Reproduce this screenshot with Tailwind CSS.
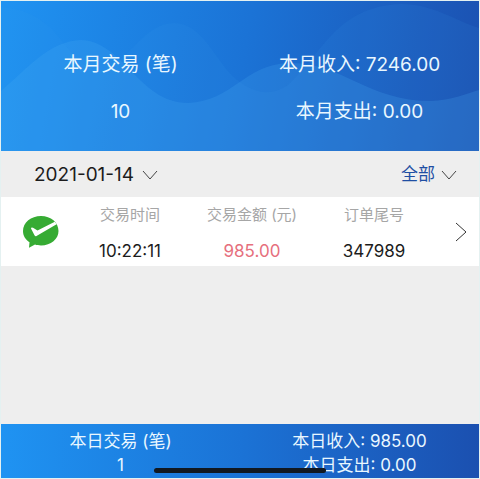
<!DOCTYPE html>
<html lang="zh-CN">

<head>
    <meta charset="UTF-8" />
    <meta name="viewport" content="width=device-width, initial-scale=1.0">
    <title>交易记录</title>
    <script src="https://cdn.jsdelivr.net/npm/@tailwindcss/browser@4"></script>
</head>

<body class="bg-[#eeeeee] min-h-screen flex flex-col border border-[#e4f1f1] font-['Inter','Noto_Sans_CJK_SC',sans-serif] text-[#1c1c1c]">

    <!-- Monthly summary -->
    <header class="relative h-[150px] bg-linear-100 from-[#1f93f2] via-[#1b73d6] to-[#1b50b0] text-[#e9f7ff] text-[19px] leading-7">
        <svg class="absolute inset-0 w-full h-full" viewBox="0 0 478 150" preserveAspectRatio="none" aria-hidden="true">
            <path fill="#3c9fe8" fill-opacity="0.1" d="M0 6C28 8 45 20 60 39C78 62 92 74 108 68C132 52 145 23 173 22C204 22 215 65 240 82C258 94 272 94 287 84C320 55 335 5 400 3C432 3 455 20 478 27V150H0Z" />
            <path fill="#4bb0f4" fill-opacity="0.2" d="M0 90C26 68 48 40 80 39C122 40 138 102 187 102C232 100 243 64 287 62C340 60 365 100 430 100C450 99 465 93 478 89V150H0Z" />
        </svg>
        <div class="relative grid grid-cols-2 gap-y-[19px] pt-[50px] text-center">
            <p>本月交易 (笔)</p>
            <p>本月收入: 7246.00</p>
            <p>10</p>
            <p>本月支出: 0.00</p>
        </div>
    </header>

    <main class="flex-1">
        <!-- Filters -->
        <div class="flex justify-between items-center h-[46px] pt-0.5 pl-[33px] pr-[22px]">
            <button class="flex items-center gap-2 text-[19px]">
                2021-01-14
                <svg class="w-4 h-4" viewBox="0 0 16 16" fill="none" stroke="#444444" aria-hidden="true">
                    <path d="M1 4L8 12L15 4" />
                </svg>
            </button>
            <button class="flex items-center gap-1.5 text-[17px] text-[#1f4ea3]">
                全部
                <svg class="w-4 h-4" viewBox="0 0 16 16" fill="none" stroke="#444444" aria-hidden="true">
                    <path d="M1 4L8 12L15 4" />
                </svg>
            </button>
        </div>

        <!-- Transaction -->
        <a href="#" class="flex items-center h-[69px] bg-white pl-[22px] pr-3">
            <svg class="w-9 h-8 shrink-0" viewBox="0 0 36 32" role="img" aria-label="微信支付">
                <path fill="#36ab33" d="M18 0C8 0 0 6.500 0 15C0 20 2.500 23.500 6.500 26.200L6 31.800L12 28.600C13.800 29.200 15.500 29.500 18 29.500C28 29.500 35.500 23 35.500 15C35.500 6.500 28 0 18 0Z" />
                <path fill="#ffffff" d="M8 12.500Q8.200 10.800 10 11.800L14.500 14.500L31.800 5.800L33.600 8.200L13.500 20Q12.200 20.600 11.500 19.300Z" />
            </svg>
            <dl class="flex-1 grid grid-cols-3 ml-2.5 mr-5 pt-0.5 text-center">
                <div>
                    <dt class="text-[15px] leading-6 text-[#a6a6a6]">交易时间</dt>
                    <dd class="mt-3 text-[17px] leading-6">10:22:11</dd>
                </div>
                <div>
                    <dt class="text-[15px] leading-6 text-[#a6a6a6]">交易金额 (元)</dt>
                    <dd class="mt-3 text-[17px] leading-6 text-[#e66f7d]">985.00</dd>
                </div>
                <div>
                    <dt class="text-[15px] leading-6 text-[#a6a6a6]">订单尾号</dt>
                    <dd class="mt-3 text-[17px] leading-6">347989</dd>
                </div>
            </dl>
            <svg class="w-3 h-5 shrink-0" viewBox="0 0 12 20" fill="none" stroke="#333333" aria-hidden="true">
                <path d="M1 1L11 10L1 19" />
            </svg>
        </a>
    </main>

    <!-- Daily summary -->
    <footer class="relative h-[54px] bg-linear-to-r from-[#1f93f2] via-[#1b73d6] to-[#1b50b0] text-[#e9f7ff] text-[17px] leading-6">
        <div class="grid grid-cols-2 pt-[5px] text-center">
            <p>本日交易 (笔)</p>
            <p>本日收入: 985.00</p>
            <p>1</p>
            <p>本日支出: 0.00</p>
        </div>
        <div class="absolute bottom-[5px] left-1/2 -translate-x-1/2 w-[172px] h-[5px] rounded-full bg-[#111820]"></div>
    </footer>

</body>

</html>
